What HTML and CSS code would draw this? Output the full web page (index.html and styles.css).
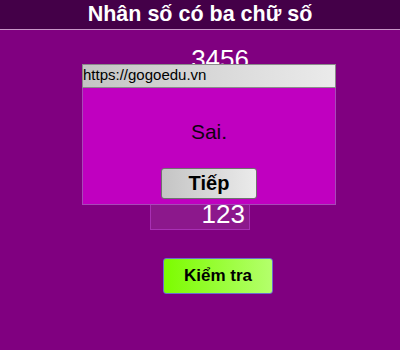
FILE: index.html
```html
<!DOCTYPE html>
<html lang="vi">
<head>
<meta charset="utf-8">
<title>Nhân số có ba chữ số</title>
<link rel="stylesheet" href="styles.css">
</head>
<body>
<div class="header">Nhân số có ba chữ số</div>
<div class="problem">
  <div class="number">3456</div>
  <input class="answer" type="text" value="123">
</div>
<div class="actions">
  <button class="check">Kiểm tra</button>
</div>
<div class="dialog">
  <div class="dialog-title">https://gogoedu.vn</div>
  <div class="dialog-body">
    <p class="message">Sai.</p>
    <button class="next">Tiếp</button>
  </div>
</div>
</body>
</html>
```

FILE: styles.css
```css
html, body {
  margin: 0;
  padding: 0;
}
body {
  width: 400px;
  height: 350px;
  background: #800080;
  font-family: "Liberation Sans", Arial, sans-serif;
  position: relative;
  overflow: hidden;
}
.header {
  height: 29px;
  line-height: 28px;
  background: #440048;
  border-bottom: 1px solid #c896c8;
  color: #ffffff;
  font-weight: bold;
  font-size: 21.5px;
  text-align: center;
}
.problem {
  width: 100px;
  margin: 14px auto 0;
  display: flex;
  flex-direction: column;
}
.number {
  font-size: 26px;
  line-height: 30px;
  color: #ffffff;
  text-align: right;
  padding-right: 1px;
}
.answer {
  margin: 116px 0 0;
  width: 100px;
  height: 40px;
  box-sizing: border-box;
  padding: 8px 4px 0;
  border: 1px solid #a830b4;
  background: #8c188c;
  color: #ffffff;
  font-family: "Liberation Sans", Arial, sans-serif;
  font-size: 26px;
  text-align: right;
  outline: none;
}
.actions {
  padding-left: 163px;
  margin-top: 28px;
}
.check {
  width: 110px;
  height: 36px;
  border: 1px solid #6c6cd0;
  border-radius: 3px;
  background: linear-gradient(to right, #7cfc00, #b4ff6c);
  color: #000000;
  font-family: "Liberation Sans", Arial, sans-serif;
  font-weight: bold;
  font-size: 17px;
  padding: 0;
}
.dialog {
  position: absolute;
  left: 82px;
  top: 64px;
  width: 254px;
}
.dialog-title {
  height: 24px;
  box-sizing: border-box;
  border: 1px solid #8a8a8a;
  background: linear-gradient(to right, #c4c4c4, #ebebeb);
  color: #000000;
  font-size: 15px;
  line-height: 18px;
  padding: 1px 0 0 0;
}
.dialog-body {
  height: 117px;
  box-sizing: border-box;
  background: #c000c0;
  border: 1px solid #a848b8;
  border-top: none;
  display: flex;
  flex-direction: column;
  align-items: center;
  padding-top: 32px;
}
.message {
  margin: 0;
  font-size: 21px;
  line-height: 24px;
  color: #100010;
}
.next {
  margin-top: 24px;
  width: 96px;
  height: 31px;
  border: 1px solid #707070;
  border-radius: 3px;
  background: linear-gradient(to right, #c4c4c4, #ebebeb);
  color: #000000;
  font-family: "Liberation Sans", Arial, sans-serif;
  font-weight: bold;
  font-size: 20px;
  padding: 0;
}
```
